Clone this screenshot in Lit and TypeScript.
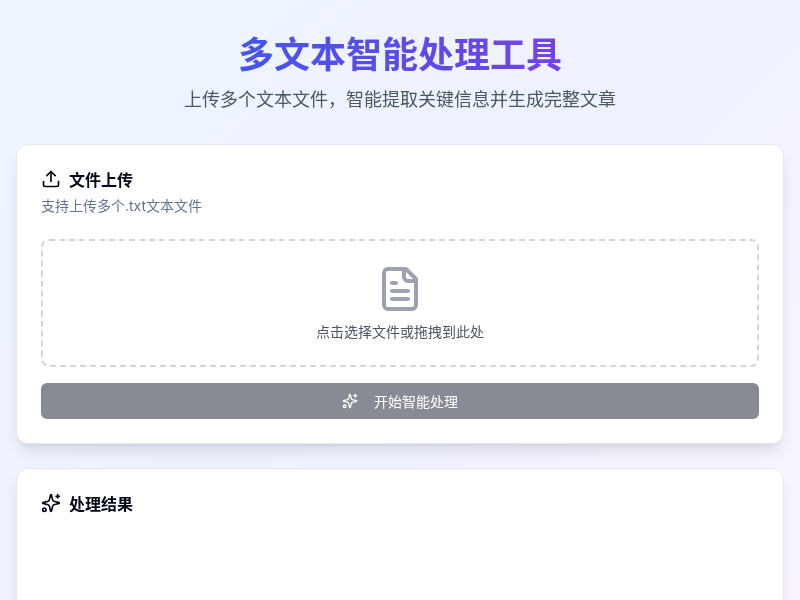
import { LitElement, html, svg, css } from "lit";
import { customElement } from "lit/decorators.js";

const sparkles = svg`<path d="M9.937 15.5A2 2 0 0 0 8.5 14.063l-6.135-1.582a.5.5 0 0 1 0-.962L8.5 9.936A2 2 0 0 0 9.937 8.5l1.582-6.135a.5.5 0 0 1 .963 0L14.063 8.5A2 2 0 0 0 15.5 9.937l6.135 1.581a.5.5 0 0 1 0 .964L15.5 14.063a2 2 0 0 0-1.437 1.437l-1.582 6.135a.5.5 0 0 1-.963 0z"/><path d="M20 2v4"/><path d="M22 4h-4"/><circle cx="4" cy="20" r="2"/>`;

@customElement("app-root")
export class AppRoot extends LitElement {
  static styles = css`
    :host {
      display: block;
      height: 600px;
      overflow: hidden;
      background: linear-gradient(135deg, #eff6ff 0%, #eef2ff 50%, #faf5ff 100%);
      font-family: Inter, "Noto Sans CJK SC", sans-serif;
      color: #020817;
    }
    .page { padding: 33px 16px 32px; box-sizing: border-box; will-change: transform; }
    header { text-align: center; margin-bottom: 30px; }
    h1 {
      margin: 0 0 8px;
      font-size: 36px;
      line-height: 45px;
      font-weight: 700;
      background: linear-gradient(90deg, #2563eb 0%, #9333ea 100%);
      -webkit-background-clip: text;
      background-clip: text;
      color: transparent;
    }
    .lead { margin: 0; font-size: 18px; line-height: 28px; color: #4b5563; font-weight: 400; }
    .card {
      background: #fff;
      border: 1px solid #e2e8f0;
      border-radius: 12px;
      padding: 24px;
      box-shadow: 0 10px 15px -3px rgba(0,0,0,.1), 0 4px 6px -4px rgba(0,0,0,.1);
      margin-bottom: 24px;
    }
    .title {
      display: flex; align-items: flex-start; gap: 8px;
      font-size: 16px; line-height: 22px; font-weight: 600;
    }
    .title svg { width: 20px; height: 20px; flex: none; }
    .desc { margin: 5px 0 0; font-size: 14px; line-height: 20px; color: #64748b; }
    .drop {
      margin-top: 23px;
      border: 2px dashed #d1d5db;
      border-radius: 8px;
      padding: 24px 24px 23px;
      display: flex; flex-direction: column; align-items: center;
    }
    .drop svg { width: 48px; height: 48px; color: #9ca3af; }
    .drop p { margin: 9px 0 0; font-size: 14px; line-height: 20px; color: #4b5563; }
    .btn {
      margin-top: 16px;
      height: 36px;
      border-radius: 6px;
      background: #888b94;
      color: #fff;
      font-size: 14px;
      font-weight: 400;
      display: flex; align-items: center; justify-content: center; gap: 16px;
    }
    .btn svg { width: 16px; height: 16px; }
    svg { fill: none; stroke: currentColor; stroke-width: 2; stroke-linecap: round; stroke-linejoin: round; display: block; }
    .result { height: 200px; }
  `;

  render() {
    return html`
      <div class="page">
        <header>
          <h1>多文本智能处理工具</h1>
          <p class="lead">上传多个文本文件，智能提取关键信息并生成完整文章</p>
        </header>
        <section class="card">
          <div class="title">
            <svg viewBox="0 0 24 24"><path d="M21 15v4a2 2 0 0 1-2 2H5a2 2 0 0 1-2-2v-4"/><polyline points="17 8 12 3 7 8"/><line x1="12" x2="12" y1="3" y2="15"/></svg>
            <span>文件上传</span>
          </div>
          <p class="desc">支持上传多个.txt文本文件</p>
          <div class="drop">
            <svg viewBox="0 0 24 24"><path d="M15 2H6a2 2 0 0 0-2 2v16a2 2 0 0 0 2 2h12a2 2 0 0 0 2-2V7Z"/><path d="M14 2v4a2 2 0 0 0 2 2h4"/><path d="M10 9H8"/><path d="M16 13H8"/><path d="M16 17H8"/></svg>
            <p>点击选择文件或拖拽到此处</p>
          </div>
          <div class="btn">
            <svg viewBox="0 0 24 24">${sparkles}</svg>
            <span>开始智能处理</span>
          </div>
        </section>
        <section class="card result">
          <div class="title">
            <svg viewBox="0 0 24 24">${sparkles}</svg>
            <span>处理结果</span>
          </div>
        </section>
      </div>
    `;
  }
}
